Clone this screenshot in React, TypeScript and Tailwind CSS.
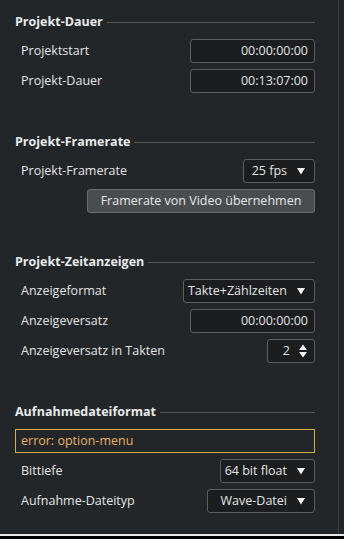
import React from "react"

function Heading({ title }: { title: string }) {
  return (
    <div className="flex h-5 items-center gap-[4px]">
      <span className="font-bold text-[#e9eaeb]">{title}</span>
      <div className="h-px flex-1 bg-[#55585b]" />
    </div>
  )
}

function Row({ label, children }: { label: string; children: React.ReactNode }) {
  return (
    <div className="flex h-6 items-center justify-between pl-[6px]">
      <span className="text-[#e3e4e5]">{label}</span>
      {children}
    </div>
  )
}

function TimeField({ value }: { value: string }) {
  return (
    <div className="flex h-6 w-[125px] items-center justify-end rounded-[3px] border border-[#5c5f62] bg-[#1b1d1f] pr-[6px] text-[#e3e4e5]">
      {value}
    </div>
  )
}

function Arrow() {
  return (
    <svg width="8" height="8" viewBox="0 0 8 8">
      <path d="M0 1 H8 L4 7.5 Z" fill="#f2f2f2" />
    </svg>
  )
}

function Select({ value, width }: { value: string; width: string }) {
  return (
    <div
      className={`flex h-6 items-center justify-end gap-[10px] rounded-[3px] border border-[#5c5f62] bg-[#1b1d1f] pr-[9px] text-[#e3e4e5] ${width}`}
    >
      <span>{value}</span>
      <Arrow />
    </div>
  )
}

export default function App() {
  return (
    <div
      className="flex h-[539px] w-[344px] flex-col bg-black text-[12.5px]"
      style={{ fontFamily: '"Open Sans", "Noto Sans", sans-serif' }}
    >
      <div className="flex h-[534px] bg-[#232629]">
        <div className="flex w-[338px] flex-col pl-[15px] pr-[23px] pt-3">
          {/* Projekt-Dauer */}
          <Heading title="Projekt-Dauer" />
          <div className="mt-[7px] flex flex-col gap-[6px]">
            <Row label="Projektstart">
              <TimeField value="00:00:00:00" />
            </Row>
            <Row label="Projekt-Dauer">
              <TimeField value="00:13:07:00" />
            </Row>
          </div>

          {/* Projekt-Framerate */}
          <div className="mt-[39px]">
            <Heading title="Projekt-Framerate" />
          </div>
          <div className="mt-[7px] flex flex-col gap-[6px]">
            <Row label="Projekt-Framerate">
              <Select value="25 fps" width="w-[72px]" />
            </Row>
            <div className="flex justify-end">
              <button className="flex h-6 w-[228px] items-center justify-center rounded-[3px] border border-[#696c6f] bg-[#4a4d50] text-[#e6e7e8]">
                Framerate von Video übernehmen
              </button>
            </div>
          </div>

          {/* Projekt-Zeitanzeigen */}
          <div className="mt-[39px]">
            <Heading title="Projekt-Zeitanzeigen" />
          </div>
          <div className="mt-[7px] flex flex-col gap-[6px]">
            <Row label="Anzeigeformat">
              <Select value="Takte+Zählzeiten" width="w-[132px]" />
            </Row>
            <Row label="Anzeigeversatz">
              <TimeField value="00:00:00:00" />
            </Row>
            <Row label="Anzeigeversatz in Takten">
              <div className="flex h-6 w-[48px] items-center justify-end gap-[9px] rounded-[3px] border border-[#5c5f62] bg-[#1b1d1f] pr-[7px] text-[#e3e4e5]">
                <span>2</span>
                <svg width="8" height="14" viewBox="0 0 8 14">
                  <path d="M0 6 L4 0.5 L8 6 Z" fill="#f2f2f2" />
                  <path d="M0 8 L8 8 L4 13.5 Z" fill="#f2f2f2" />
                </svg>
              </div>
            </Row>
          </div>

          {/* Aufnahmedateiformat */}
          <div className="mt-[39px]">
            <Heading title="Aufnahmedateiformat" />
          </div>
          <div className="mt-[7px] flex flex-col gap-[6px]">
            <div className="flex h-6 items-center border border-[#d2b04c] pl-[5px] text-[#eab067]">
              error: option-menu
            </div>
            <Row label="Bittiefe">
              <Select value="64 bit float" width="w-[95px]" />
            </Row>
            <Row label="Aufnahme-Dateityp">
              <Select value="Wave-Datei" width="w-[108px]" />
            </Row>
          </div>
        </div>
        <div className="w-px bg-[#3a3d40]" />
      </div>
      <div className="h-[2px] bg-[#e8e8e8]" />
    </div>
  )
}
